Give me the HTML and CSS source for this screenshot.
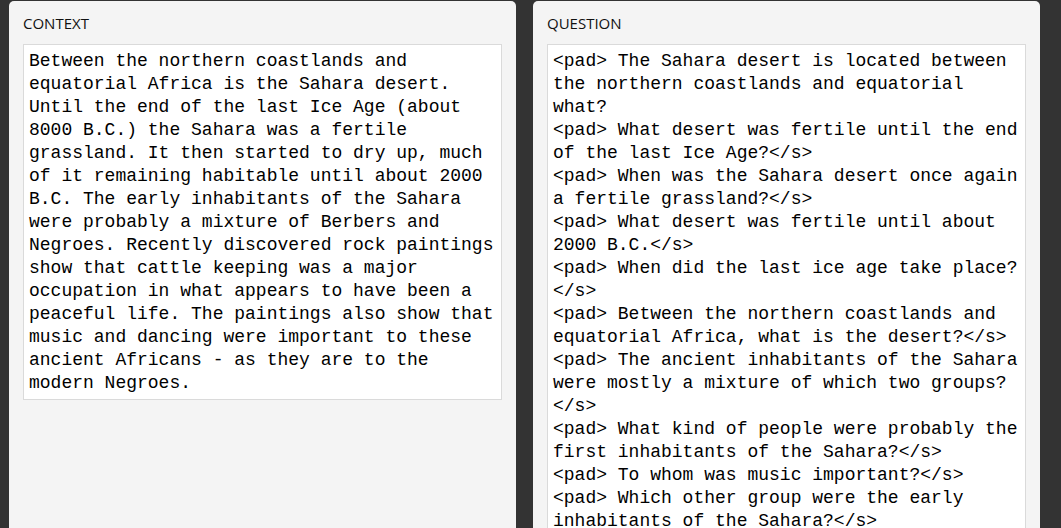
FILE: index.html
```html
<!DOCTYPE html>
<html>
<head>
<meta charset="utf-8">
<link rel="stylesheet" href="styles.css">
</head>
<body>
<div class="page">
  <section class="panel">
    <h2 class="label">CONTEXT</h2>
    <div class="box box-context">Between the northern coastlands and
equatorial Africa is the Sahara desert.
Until the end of the last Ice Age (about
8000 B.C.) the Sahara was a fertile
grassland. It then started to dry up, much
of it remaining habitable until about 2000
B.C. The early inhabitants of the Sahara
were probably a mixture of Berbers and
Negroes. Recently discovered rock paintings
show that cattle keeping was a major
occupation in what appears to have been a
peaceful life. The paintings also show that
music and dancing were important to these
ancient Africans - as they are to the
modern Negroes.</div>
  </section>
  <section class="panel">
    <h2 class="label">QUESTION</h2>
    <div class="box box-question">&lt;pad&gt; The Sahara desert is located between
the northern coastlands and equatorial
what?
&lt;pad&gt; What desert was fertile until the end
of the last Ice Age?&lt;/s&gt;
&lt;pad&gt; When was the Sahara desert once again
a fertile grassland?&lt;/s&gt;
&lt;pad&gt; What desert was fertile until about
2000 B.C.&lt;/s&gt;
&lt;pad&gt; When did the last ice age take place?
&lt;/s&gt;
&lt;pad&gt; Between the northern coastlands and
equatorial Africa, what is the desert?&lt;/s&gt;
&lt;pad&gt; The ancient inhabitants of the Sahara
were mostly a mixture of which two groups?
&lt;/s&gt;
&lt;pad&gt; What kind of people were probably the
first inhabitants of the Sahara?&lt;/s&gt;
&lt;pad&gt; To whom was music important?&lt;/s&gt;
&lt;pad&gt; Which other group were the early
inhabitants of the Sahara?&lt;/s&gt;</div>
  </section>
</div>
</body>
</html>
```

FILE: styles.css
```css
html, body {
  margin: 0;
  padding: 0;
  background: #333333;
  height: 528px;
  overflow: hidden;
}

.page {
  display: flex;
  gap: 17px;
  padding: 1px 21px 0 9px;
}

.panel {
  width: 507px;
  height: 620px;
  box-sizing: border-box;
  background: #f4f4f4;
  border-radius: 5px;
  padding: 12px 14px 0 14px;
}

.label {
  margin: 0 0 11px 0;
  font-family: "Open Sans", "Noto Sans", sans-serif;
  font-weight: 400;
  font-size: 15px;
  line-height: 20px;
  color: #111111;
  letter-spacing: 0;
}

.box {
  background: #ffffff;
  border: 1px solid #dadada;
  padding: 5px 5px 4px 5px;
  font-family: "Liberation Mono", "DejaVu Sans Mono", monospace;
  font-size: 18px;
  line-height: 23px;
  color: #000000;
  white-space: pre;
}

.box-question {
  min-height: 560px;
}
```
